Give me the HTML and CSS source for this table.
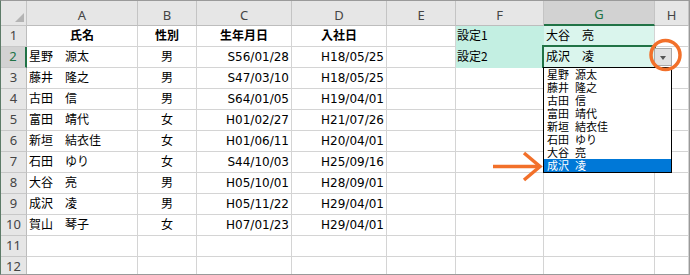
FILE: index.html
```html
<!DOCTYPE html>
<html lang="ja">
<head>
<meta charset="utf-8">
<title>Sheet</title>
<link rel="stylesheet" href="styles.css">
</head>
<body>
<div class="frame">
  <div class="sheet">
    <div class="corner"><span class="tri"></span></div>
    <div class="ch">A</div><div class="ch">B</div><div class="ch">C</div><div class="ch">D</div><div class="ch">E</div><div class="ch">F</div><div class="ch sel">G</div><div class="ch">H</div>

    <div class="rh">1</div>
    <div class="c m b">氏名</div><div class="c m b">性別</div><div class="c m b">生年月日</div><div class="c m b">入社日</div><div class="c"></div><div class="c fa fa1">設定1</div><div class="c fb">大谷　亮</div><div class="c"></div>

    <div class="rh sel">2</div>
    <div class="c t">星野　源太</div><div class="c m">男</div><div class="c n">S56/01/28</div><div class="c n">H18/05/25</div><div class="c"></div><div class="c fa">設定2</div><div class="c fb">成沢　凌</div><div class="c"></div>

    <div class="rh">3</div>
    <div class="c t">藤井　隆之</div><div class="c m">男</div><div class="c n">S47/03/10</div><div class="c n">H18/05/25</div><div class="c"></div><div class="c"></div><div class="c"></div><div class="c"></div>

    <div class="rh">4</div>
    <div class="c t">古田　信</div><div class="c m">男</div><div class="c n">S64/01/05</div><div class="c n">H19/04/01</div><div class="c"></div><div class="c"></div><div class="c"></div><div class="c"></div>

    <div class="rh">5</div>
    <div class="c t">富田　靖代</div><div class="c m">女</div><div class="c n">H01/02/27</div><div class="c n">H21/07/26</div><div class="c"></div><div class="c"></div><div class="c"></div><div class="c"></div>

    <div class="rh">6</div>
    <div class="c t">新垣　結衣佳</div><div class="c m">女</div><div class="c n">H01/06/11</div><div class="c n">H20/04/01</div><div class="c"></div><div class="c"></div><div class="c"></div><div class="c"></div>

    <div class="rh">7</div>
    <div class="c t">石田　ゆり</div><div class="c m">女</div><div class="c n">S44/10/03</div><div class="c n">H25/09/16</div><div class="c"></div><div class="c"></div><div class="c"></div><div class="c"></div>

    <div class="rh">8</div>
    <div class="c t">大谷　亮</div><div class="c m">男</div><div class="c n">H05/10/01</div><div class="c n">H28/09/01</div><div class="c"></div><div class="c"></div><div class="c"></div><div class="c"></div>

    <div class="rh">9</div>
    <div class="c t">成沢　凌</div><div class="c m">男</div><div class="c n">H05/11/22</div><div class="c n">H29/04/01</div><div class="c"></div><div class="c"></div><div class="c"></div><div class="c"></div>

    <div class="rh">10</div>
    <div class="c t">賀山　琴子</div><div class="c m">女</div><div class="c n">H07/01/23</div><div class="c n">H29/04/01</div><div class="c"></div><div class="c"></div><div class="c"></div><div class="c"></div>

    <div class="rh">11</div>
    <div class="c"></div><div class="c"></div><div class="c"></div><div class="c"></div><div class="c"></div><div class="c"></div><div class="c"></div><div class="c"></div>

    <div class="rh">12</div>
    <div class="c"></div><div class="c"></div><div class="c"></div><div class="c"></div><div class="c"></div><div class="c"></div><div class="c"></div><div class="c"></div>
  </div>

  <div class="active"></div>
  <div class="ddbtn"><span class="ddarrow"></span></div>
  <ul class="ddlist">
    <li>星野<span class="sp">　</span>源太</li>
    <li>藤井<span class="sp">　</span>隆之</li>
    <li>古田<span class="sp">　</span>信</li>
    <li>富田<span class="sp">　</span>靖代</li>
    <li>新垣<span class="sp">　</span>結衣佳</li>
    <li>石田<span class="sp">　</span>ゆり</li>
    <li>大谷<span class="sp">　</span>亮</li>
    <li class="hl">成沢<span class="sp">　</span>凌</li>
  </ul>

  <svg class="anno" width="690" height="275" viewBox="0 0 690 275">
    <circle cx="665.5" cy="55" r="14.5" fill="none" stroke="#f2702a" stroke-width="3.5"/>
    <line x1="493" y1="166.5" x2="539" y2="166.5" stroke="#f2702a" stroke-width="3.5"/>
    <polyline points="524,153 540,166.5 524,180" fill="none" stroke="#f2702a" stroke-width="3.5" stroke-linejoin="miter"/>
  </svg>
</div>
</body>
</html>
```
FILE: styles.css
```css
html, body {
  margin: 0;
  padding: 0;
  background: #fff;
}

.frame {
  position: relative;
  width: 690px;
  height: 275px;
  box-sizing: border-box;
  border: 1px solid #9a9a9a;
  border-left-color: #5d7b68;
  overflow: hidden;
  background: #fff;
}

.sheet {
  display: grid;
  grid-template-columns: 26px 111px 59px 95px 95px 69px 88px 111px 1fr;
  grid-template-rows: 25px;
  grid-auto-rows: 21px;
}

.sheet > div {
  box-sizing: border-box;
  border-right: 1px solid #d4d4d4;
  border-bottom: 1px solid #d4d4d4;
  white-space: nowrap;
  overflow: hidden;
}

.corner {
  position: relative;
  background: #e6e6e6;
  border-color: #c4c4c4 !important;
}

.tri {
  position: absolute;
  right: 2px;
  bottom: 3px;
  width: 0;
  height: 0;
  border-left: 9px solid transparent;
  border-bottom: 9px solid #b4b4b4;
}

.ch {
  background: #e6e6e6;
  border-right-color: #c4c4c4 !important;
  border-bottom-color: #bdbdbd !important;
  text-align: center;
  font: 13px/28px "Noto Sans", sans-serif;
  color: #444;
}

.ch.sel {
  background: #d2d2d2;
  color: #217346;
  border-bottom: 2px solid #217346 !important;
  line-height: 27px;
}

.rh {
  background: #e6e6e6;
  border-right-color: #bdbdbd !important;
  border-bottom-color: #c8c8c8 !important;
  text-align: center;
  font: 13px/18px "Noto Sans", sans-serif;
  color: #444;
}

.rh.sel {
  background: #d2d2d2;
  color: #217346;
  border-right: 2px solid #217346 !important;
}

.c {
  font: 12px/17px "Noto Sans CJK JP", sans-serif;
  color: #000;
}

.t {
  padding-left: 2px;
}

.m {
  text-align: center;
}

.b {
  font-weight: 700;
}

.n {
  text-align: right;
  padding-right: 2px;
  font: 12px/20px "DejaVu Sans", sans-serif;
}

.fa {
  background: #c3efe2;
  border-right-color: #c3efe2 !important;
  border-bottom-color: #c3efe2 !important;
  padding-left: 1px;
}

.fa1 {
  border-bottom-color: #c3efe2 !important;
}

.fb {
  background: #daf5ed;
  padding-left: 2px;
}

.active {
  position: absolute;
  left: 541px;
  top: 44px;
  width: 114px;
  height: 23px;
  box-sizing: border-box;
  border: 2px solid #217346;
  border-bottom: none;
}

.ddbtn {
  position: absolute;
  left: 653px;
  top: 47px;
  width: 18px;
  height: 18px;
  box-sizing: border-box;
  background: #e1e1e1;
  border: 1px solid #a8a8a8;
  display: flex;
  align-items: center;
  justify-content: center;
}

.ddarrow {
  width: 0;
  height: 0;
  margin-top: 2px;
  border-left: 3.5px solid transparent;
  border-right: 3.5px solid transparent;
  border-top: 4px solid #555;
}

.ddlist {
  position: absolute;
  left: 542px;
  top: 66px;
  width: 129px;
  margin: 0;
  padding: 0;
  list-style: none;
  box-sizing: border-box;
  background: #fff;
  border: 1px solid #000;
}

.ddlist li {
  height: 13px;
  padding-left: 3px;
  font: 11px/13px "Noto Sans CJK JP", sans-serif;
  color: #000;
  white-space: nowrap;
}

.ddlist li.hl {
  background: #0078d7;
  color: #fff;
}

.sp {
  letter-spacing: -5px;
}

.anno {
  position: absolute;
  left: -1px;
  top: -1px;
  pointer-events: none;
}
```
